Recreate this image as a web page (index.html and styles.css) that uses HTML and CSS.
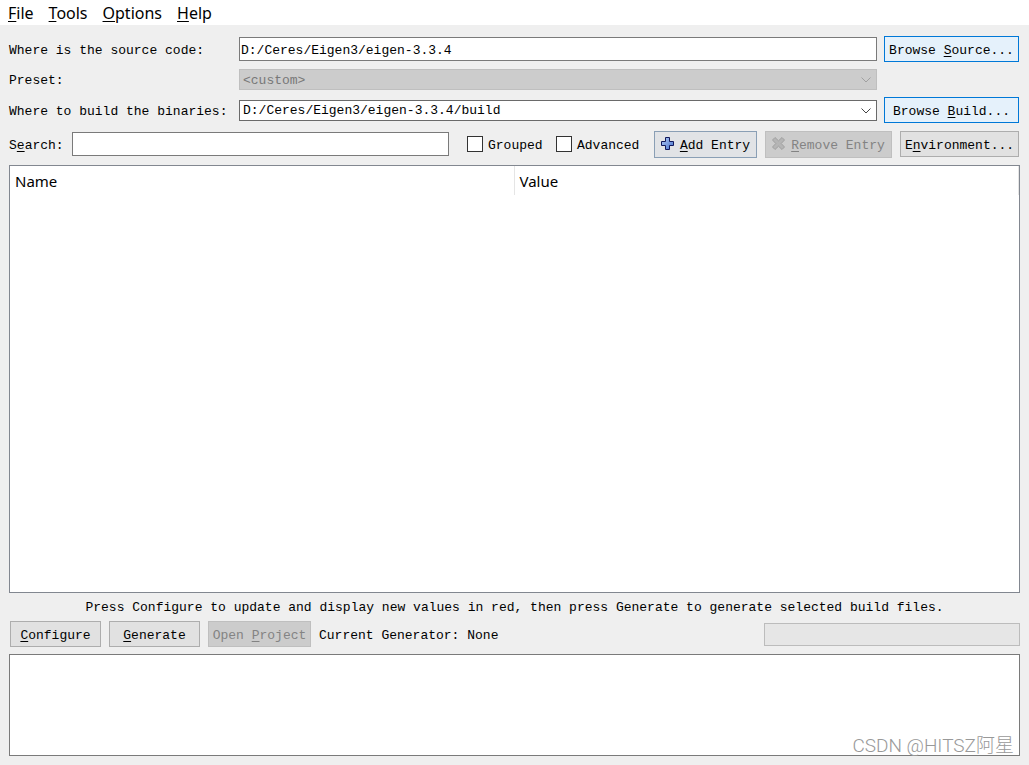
FILE: index.html
```html
<!DOCTYPE html>
<html lang="en">
<head>
  <meta charset="UTF-8" />
  <meta name="viewport" content="width=device-width, initial-scale=1.0" />
  <title>CMake</title>
  <link rel="stylesheet" href="styles.css">
</head>

<body>
  <nav class="menubar">
    <a href="#"><u>F</u>ile</a>
    <a href="#"><u>T</u>ools</a>
    <a href="#"><u>O</u>ptions</a>
    <a href="#"><u>H</u>elp</a>
  </nav>

  <main class="window">
    <div class="paths">
      <label class="caption" for="source">Where is the source code:</label>
      <input type="text" id="source" class="field" value="D:/Ceres/Eigen3/eigen-3.3.4" />
      <button type="button" class="btn btn-active"><span class="caption">Browse <u>S</u>ource...</span></button>

      <label class="caption" for="preset">Preset:</label>
      <div class="combo combo-disabled">
        <select id="preset" disabled>
          <option>&lt;custom&gt;</option>
        </select>
        <svg class="chevron" viewBox="0 0 10 6" width="10" height="6"><path d="M0.5 0.5 L5 5 L9.5 0.5" /></svg>
      </div>
      <span></span>

      <label class="caption" for="binaries">Where to build the binaries:</label>
      <div class="combo">
        <select id="binaries">
          <option>D:/Ceres/Eigen3/eigen-3.3.4/build</option>
        </select>
        <svg class="chevron" viewBox="0 0 10 6" width="10" height="6"><path d="M0.5 0.5 L5 5 L9.5 0.5" /></svg>
      </div>
      <button type="button" class="btn btn-active"><span class="caption">Browse <u>B</u>uild...</span></button>
    </div>

    <div class="toolbar">
      <label class="caption" for="search">S<u>e</u>arch:</label>
      <input type="text" id="search" class="field search" />
      <div class="checks">
        <label class="check"><input type="checkbox" /><span class="caption">Grouped</span></label>
        <label class="check"><input type="checkbox" /><span class="caption">Advanced</span></label>
      </div>
      <button type="button" class="btn btn-add">
        <svg viewBox="0 0 14 14" width="14" height="14">
          <defs>
            <linearGradient id="plus" x1="0" y1="0" x2="1" y2="1">
              <stop offset="0" stop-color="#b4cbf5" />
              <stop offset="1" stop-color="#4470cc" />
            </linearGradient>
          </defs>
          <path d="M4.5 0.5h4v4h4v4h-4v4h-4v-4h-4v-4h4z" fill="url(#plus)" stroke="#10185c" />
        </svg>
        <span class="caption"><u>A</u>dd Entry</span>
      </button>
      <button type="button" class="btn btn-remove" disabled>
        <svg viewBox="0 0 14 14" width="14" height="14">
          <path d="M3 0.5L6.5 3.8L10 0.5L12.5 3L9.2 6.5L12.5 10L10 12.5L6.5 9.2L3 12.5L0.5 10L3.8 6.5L0.5 3z" fill="#b5b5b5" stroke="#a0a0a0" />
        </svg>
        <span class="caption"><u>R</u>emove Entry</span>
      </button>
      <button type="button" class="btn btn-env"><span class="caption">E<u>n</u>vironment...</span></button>
    </div>

    <div class="cache">
      <table>
        <thead>
          <tr>
            <th>Name</th>
            <th>Value</th>
          </tr>
        </thead>
        <tbody></tbody>
      </table>
    </div>

    <p class="hint">Press Configure to update and display new values in red, then press Generate to generate selected build files.</p>

    <div class="actions">
      <button type="button" class="btn btn-run"><span class="caption"><u>C</u>onfigure</span></button>
      <button type="button" class="btn btn-run"><span class="caption"><u>G</u>enerate</span></button>
      <button type="button" class="btn btn-open" disabled><span class="caption">Open <u>P</u>roject</span></button>
      <span class="generator caption">Current Generator: None</span>
      <div class="progress" role="progressbar" aria-label="Progress"></div>
    </div>

    <textarea class="log" aria-label="Output" readonly></textarea>
  </main>

  <div class="watermark">CSDN @HITSZ阿星</div>
</body>
</html>
```

FILE: styles.css
```css
* {
  box-sizing: border-box;
}

body {
  margin: 0;
  min-height: 100vh;
  display: flex;
  flex-direction: column;
  position: relative;
  background-color: #efefef;
  color: #000;
  font-family: "Liberation Mono", monospace;
  font-size: 13px;
  line-height: 14px;
}

input,
select,
button,
textarea {
  margin: 0;
  font: inherit;
  color: inherit;
  border-radius: 0;
}

u {
  text-underline-offset: 2px;
  text-decoration-thickness: 1px;
}

.caption {
  padding-top: 3px;
}

/* Menu */
.menubar {
  display: flex;
  gap: 15px;
  height: 25px;
  padding: 0 8px;
  background-color: #fff;
  font-family: "Noto Sans", sans-serif;
  font-size: 16px;
  line-height: 26px;
}

.menubar a {
  color: #000;
  text-decoration: none;
}

.window {
  flex: 1;
  display: flex;
  flex-direction: column;
  gap: 7px;
  padding: 11px 9px 9px;
}

/* Source and build paths */
.paths {
  display: grid;
  grid-template-columns: 223px 1fr 135px;
  grid-template-rows: 26px 21px 26px;
  gap: 7px;
  align-items: center;
  padding-right: 1px;
}

.field {
  width: 100%;
  height: 24px;
  padding: 2px 1px 0;
  border: 1px solid #7a7a7a;
  background-color: #fff;
}

.combo {
  position: relative;
}

.combo select {
  display: block;
  width: 100%;
  height: 21px;
  padding: 2px 20px 0 3px;
  border: 1px solid #6a6a6a;
  background-color: #fff;
  appearance: none;
}

.combo-disabled select {
  border-color: #bfbfbf;
  background-color: #ccc;
  color: #787878;
  opacity: 1;
}

.chevron {
  position: absolute;
  top: 8px;
  right: 6px;
  fill: none;
  stroke: #444;
  pointer-events: none;
}

.combo-disabled .chevron {
  stroke: #a0a0a0;
}

/* Buttons */
.btn {
  display: flex;
  align-items: center;
  justify-content: center;
  height: 26px;
  padding: 0;
  border: 1px solid #adadad;
  background-color: #e1e1e1;
  white-space: nowrap;
}

.btn:disabled {
  border-color: #bfbfbf;
  background-color: #ccc;
  color: #838383;
}

.btn-active {
  border-color: #0078d7;
  background-color: #e5f1fb;
}

.btn-add,
.btn-remove {
  gap: 5px;
  height: 27px;
}

.btn-add {
  width: 103px;
  border-color: #8a9fb5;
  background-color: #e1e3e6;
}

.btn-remove {
  width: 127px;
}

.btn-env {
  width: 119px;
}

.btn-run {
  width: 91px;
}

.btn-open {
  width: 103px;
}

/* Search row */
.toolbar {
  display: flex;
  align-items: center;
  gap: 8px;
  height: 28px;
  padding-right: 1px;
}

.search {
  flex: 1;
  min-width: 0;
}

.checks {
  display: grid;
  grid-template-columns: 89px 90px;
  padding-left: 10px;
}

.check {
  display: flex;
  align-items: center;
  gap: 5px;
}

.check input {
  width: 16px;
  height: 16px;
  border: 1px solid #333;
  background-color: #fff;
  appearance: none;
}

.check input:checked {
  background-color: #0078d7;
}

/* Cache entries */
.cache {
  flex: 1;
  border: 1px solid #828790;
  background-color: #fff;
}

.cache table {
  width: 100%;
  table-layout: fixed;
  border-collapse: separate;
  border-spacing: 0;
}

.cache th {
  height: 29px;
  padding: 0 5px;
  border-right: 1px solid #e5e5e5;
  font-family: "Noto Sans", sans-serif;
  font-size: 15px;
  font-weight: normal;
  text-align: left;
}

.hint {
  margin: 0;
  line-height: 16px;
  height: 14px;
  text-align: center;
}

.actions {
  display: flex;
  align-items: center;
  gap: 8px;
  height: 26px;
  padding-left: 1px;
}

.generator {
  flex: 1;
}

.progress {
  width: 256px;
  height: 23px;
  border: 1px solid #bcbcbc;
  background-color: #e6e6e6;
}

.log {
  display: block;
  width: 100%;
  height: 102px;
  border: 1px solid #7a7a7a;
  background-color: #fff;
  resize: none;
}

.watermark {
  position: absolute;
  right: 15px;
  bottom: 7px;
  color: #999;
  font-family: Roboto, "Noto Sans CJK SC", sans-serif;
  font-size: 19px;
  font-weight: 300;
  line-height: 24px;
}
```
